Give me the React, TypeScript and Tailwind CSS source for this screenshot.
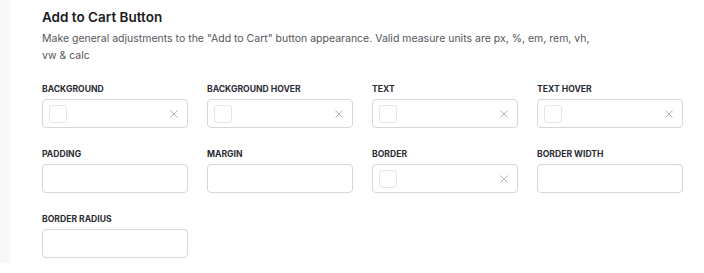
const colorFields = ["Background", "Background Hover", "Text", "Text Hover"];

interface FieldProps {
  label: string;
  color?: boolean;
}

function Field({ label, color }: FieldProps) {
  return (
    <div className="flex flex-col">
      <label className="text-[8.6px] leading-[12px] font-bold uppercase text-[#2b2b33] mb-[4px]">
        {label}
      </label>
      <div className="h-[29px] w-[146px] rounded-[4px] border border-[#d6d6d6] bg-white flex items-center px-[6px]">
        {color && (
          <>
            <span className="h-[18px] w-[18px] rounded-[3px] border border-[#e6e6e6]" />
            <svg
              className="ml-auto mr-[3px]"
              width="8"
              height="8"
              viewBox="0 0 8 8"
              fill="none"
              stroke="#b5b5b5"
              strokeWidth="1"
            >
              <path d="M0.5 0.5 L7.5 7.5 M7.5 0.5 L0.5 7.5" />
            </svg>
          </>
        )}
      </div>
    </div>
  );
}

export default function App() {
  return (
    <div className="flex w-[704px] h-[273px] bg-white font-['Inter',sans-serif]">
      <div className="w-[10px] h-[263px] bg-[#f7f8fa]" />
      <div className="flex-1 pl-[32px] pt-[7px]">
        <h2 className="text-[13.5px] leading-[20px] font-semibold text-[#1b1b22]">
          Add to Cart Button
        </h2>
        <p className="mt-[3px] w-[560px] text-[10.5px] leading-[17px] text-[#55565c]">
          Make general adjustments to the "Add to Cart" button appearance. Valid
          measure units are px, %, em, rem, vh, vw &amp; calc
        </p>

        <div className="mt-[19px] grid grid-cols-[146px_146px_146px_146px] gap-x-[19px] gap-y-[20px]">
          {colorFields.map((f) => (
            <Field key={f} label={f} color />
          ))}
          <Field label="Padding" />
          <Field label="Margin" />
          <Field label="Border" color />
          <Field label="Border Width" />
          <Field label="Border Radius" />
        </div>
      </div>
    </div>
  );
}
